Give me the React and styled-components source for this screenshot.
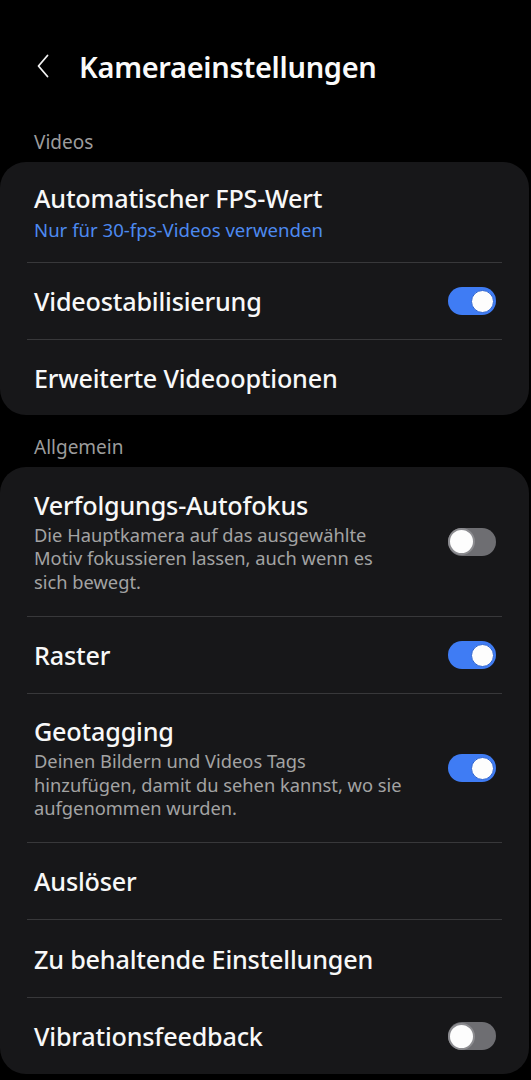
import React from "react";
import styled, { createGlobalStyle } from "styled-components";

const Global = createGlobalStyle`
  html, body { margin: 0; padding: 0; background: #000; }
  body { font-family: "Noto Sans", Roboto, sans-serif; color: #f7f7f7; }
  * { box-sizing: border-box; }
`;

const Page = styled.div`
  width: 531px;
  min-height: 1080px;
  background: #000;
  padding: 0 2px 0 0;
  display: flex;
  flex-direction: column;
`;

const Header = styled.header`
  display: flex;
  align-items: center;
  height: 128px;
  padding: 4px 0 0 34px;
  gap: 27px;
`;

const Back = styled.button`
  background: none;
  border: 0;
  padding: 0;
  width: 18px;
  height: 26px;
  display: flex;
  align-items: center;
  justify-content: center;
  color: #f2f2f2;
`;

const Title = styled.h1`
  margin: 0;
  font-size: 29px;
  font-weight: 600;
  letter-spacing: -0.3px;
  color: #fafafa;
`;

const SectionLabel = styled.div`
  padding: 0 34px;
  height: 28px;
  display: flex;
  align-items: center;
  font-size: 19px;
  color: #9c9c9c;
  margin-top: ${(p) => p.$top || 0}px;
  margin-bottom: 6px;
`;

const Card = styled.section`
  background: #171719;
  border-radius: 26px;
  display: flex;
  flex-direction: column;
`;

const Row = styled.div`
  display: flex;
  align-items: center;
  min-height: ${(p) => p.$h}px;
  padding: 0 33px 0 34px;
  position: relative;
`;

const Divider = styled.div`
  height: 1px;
  margin: 0 27px;
  background: #38383a;
`;

const Texts = styled.div`
  flex: 1;
  display: flex;
  flex-direction: column;
  padding-right: ${(p) => (p.$pr ? 42 : 0)}px;
`;

const RowTitle = styled.div`
  font-size: 25.2px;
  font-weight: 500;
  color: #f8f8f8;
  line-height: 30px;
  letter-spacing: -0.2px;
`;

const Sub = styled.div`
  font-size: ${(p) => (p.$blue ? 18.6 : 18.3)}px;
  line-height: 23.5px;
  color: ${(p) => (p.$blue ? "#4d8af0" : "#a3a3a3")};
  margin-top: ${(p) => (p.$blue ? 5 : 3)}px;
`;

const Track = styled.div`
  width: 48px;
  height: 28px;
  border-radius: 14px;
  background: ${(p) => (p.$on ? "#3f7cf4" : "#6e6e72")};
  position: relative;
  flex-shrink: 0;
`;

const Knob = styled.div`
  position: absolute;
  top: ${(p) => (p.$on ? 2.5 : 0.5)}px;
  left: ${(p) => (p.$on ? 23 : 0)}px;
  width: ${(p) => (p.$on ? 23 : 27)}px;
  height: ${(p) => (p.$on ? 23 : 27)}px;
  border-radius: 50%;
  background: #fdfdfd;
  border: ${(p) => (p.$on ? "1px solid #2e64d0" : "2.5px solid #8c8c90")};
`;

const Toggle = ({ on }) => (
  <Track $on={on}>
    <Knob $on={on} />
  </Track>
);

const Item = ({ title, sub, blue, toggle, h = 76, first }) => (
  <>
    {!first && <Divider />}
    <Row $h={h}>
      <Texts $pr={!!sub && !blue}>
        <RowTitle>{title}</RowTitle>
        {sub && <Sub $blue={blue}>{sub}</Sub>}
      </Texts>
      {toggle !== undefined && <Toggle on={toggle} />}
    </Row>
  </>
);

export default function App() {
  return (
    <>
      <Global />
      <Page>
        <Header>
          <Back aria-label="Zurück">
            <svg width="12" height="24" viewBox="0 0 12 24">
              <path d="M10.5 1.5 L1.5 12 L10.5 22.5" fill="none" stroke="#f2f2f2" strokeWidth="1.8" strokeLinecap="round" strokeLinejoin="round" />
            </svg>
          </Back>
          <Title>Kameraeinstellungen</Title>
        </Header>
        <SectionLabel>Videos</SectionLabel>
        <Card>
          <Item first h={100} title="Automatischer FPS-Wert" sub="Nur für 30-fps-Videos verwenden" blue />
          <Item title="Videostabilisierung" toggle={true} />
          <Item h={75} title="Erweiterte Videooptionen" />
        </Card>
        <SectionLabel $top={18}>Allgemein</SectionLabel>
        <Card>
          <Item first h={149} title="Verfolgungs-Autofokus" sub="Die Hauptkamera auf das ausgewählte Motiv fokussieren lassen, auch wenn es sich bewegt." toggle={false} />
          <Item title="Raster" toggle={true} />
          <Item h={148} title="Geotagging" sub="Deinen Bildern und Videos Tags hinzufügen, damit du sehen kannst, wo sie aufgenommen wurden." toggle={true} />
          <Item title="Auslöser" />
          <Item h={77} title="Zu behaltende Einstellungen" />
          <Item h={76} title="Vibrationsfeedback" toggle={false} />
        </Card>
      </Page>
    </>
  );
}
